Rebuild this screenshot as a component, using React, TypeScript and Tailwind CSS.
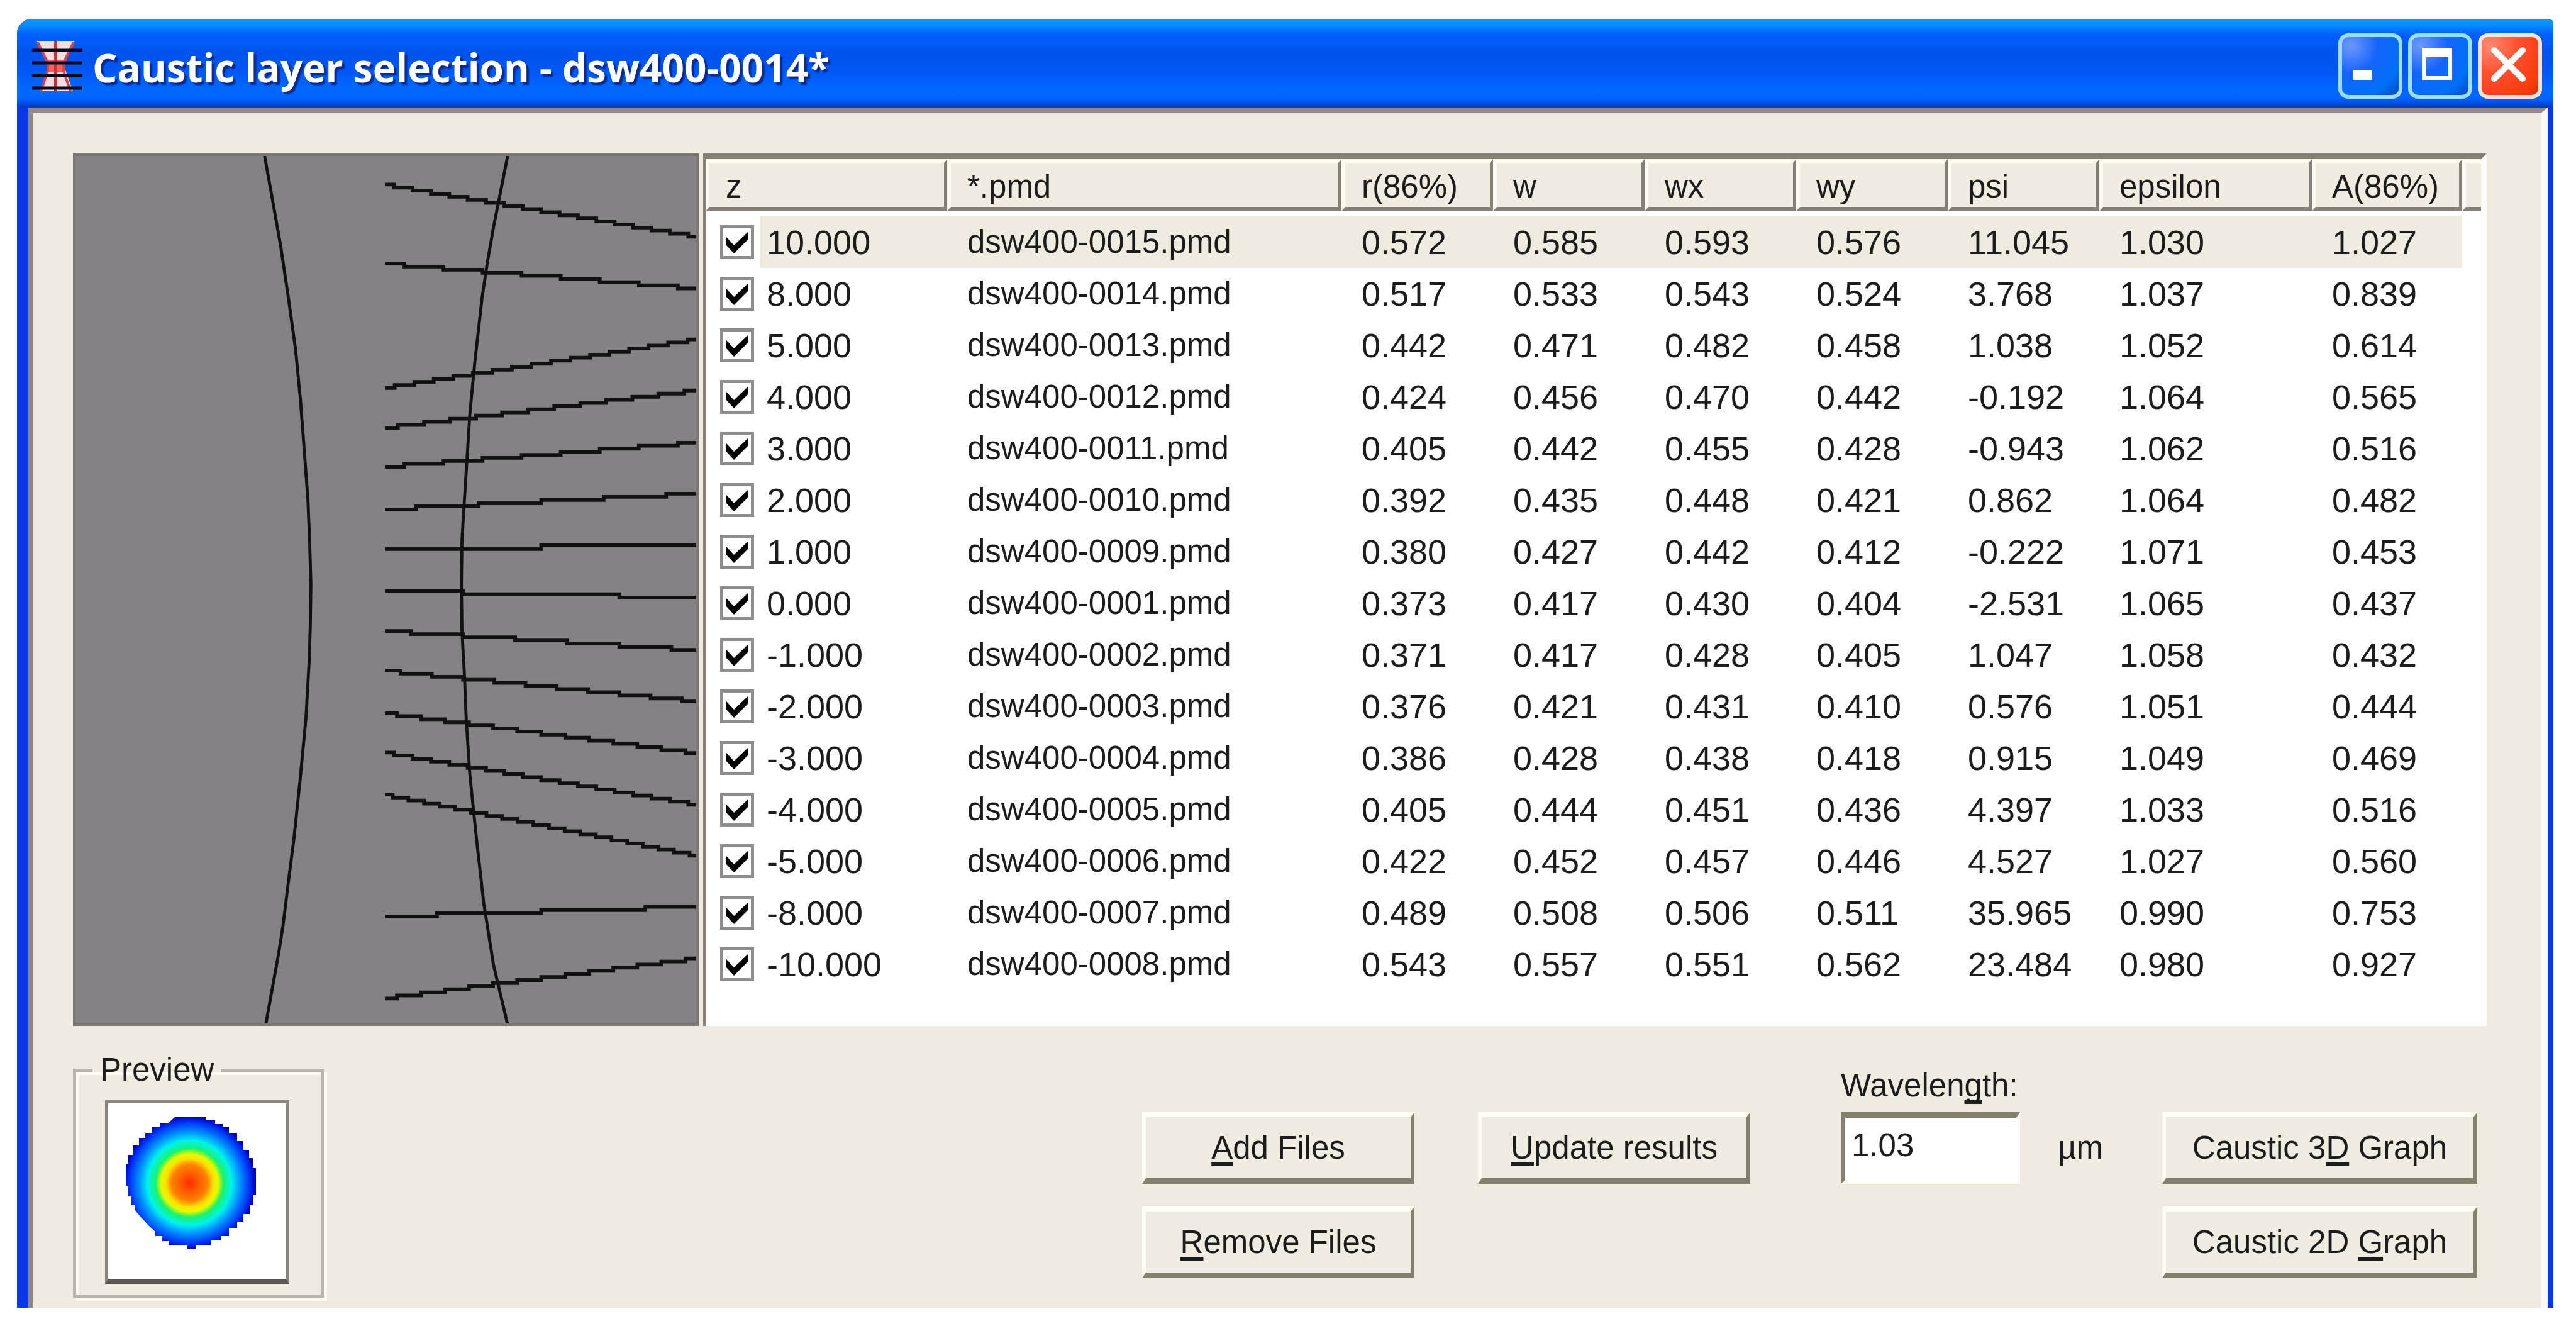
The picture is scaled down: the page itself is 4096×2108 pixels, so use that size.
import { useState } from "react";
import type { ReactNode } from "react";

interface Layer {
  z: string;
  file: string;
  values: string[];
}

const columns = ["z", "*.pmd", "r(86%)", "w", "wx", "wy", "psi", "epsilon", "A(86%)"];

const layers: Layer[] = [
  { z: "10.000", file: "dsw400-0015.pmd", values: ["0.572", "0.585", "0.593", "0.576", "11.045", "1.030", "1.027"] },
  { z: "8.000", file: "dsw400-0014.pmd", values: ["0.517", "0.533", "0.543", "0.524", "3.768", "1.037", "0.839"] },
  { z: "5.000", file: "dsw400-0013.pmd", values: ["0.442", "0.471", "0.482", "0.458", "1.038", "1.052", "0.614"] },
  { z: "4.000", file: "dsw400-0012.pmd", values: ["0.424", "0.456", "0.470", "0.442", "-0.192", "1.064", "0.565"] },
  { z: "3.000", file: "dsw400-0011.pmd", values: ["0.405", "0.442", "0.455", "0.428", "-0.943", "1.062", "0.516"] },
  { z: "2.000", file: "dsw400-0010.pmd", values: ["0.392", "0.435", "0.448", "0.421", "0.862", "1.064", "0.482"] },
  { z: "1.000", file: "dsw400-0009.pmd", values: ["0.380", "0.427", "0.442", "0.412", "-0.222", "1.071", "0.453"] },
  { z: "0.000", file: "dsw400-0001.pmd", values: ["0.373", "0.417", "0.430", "0.404", "-2.531", "1.065", "0.437"] },
  { z: "-1.000", file: "dsw400-0002.pmd", values: ["0.371", "0.417", "0.428", "0.405", "1.047", "1.058", "0.432"] },
  { z: "-2.000", file: "dsw400-0003.pmd", values: ["0.376", "0.421", "0.431", "0.410", "0.576", "1.051", "0.444"] },
  { z: "-3.000", file: "dsw400-0004.pmd", values: ["0.386", "0.428", "0.438", "0.418", "0.915", "1.049", "0.469"] },
  { z: "-4.000", file: "dsw400-0005.pmd", values: ["0.405", "0.444", "0.451", "0.436", "4.397", "1.033", "0.516"] },
  { z: "-5.000", file: "dsw400-0006.pmd", values: ["0.422", "0.452", "0.457", "0.446", "4.527", "1.027", "0.560"] },
  { z: "-8.000", file: "dsw400-0007.pmd", values: ["0.489", "0.508", "0.506", "0.511", "35.965", "0.990", "0.753"] },
  { z: "-10.000", file: "dsw400-0008.pmd", values: ["0.543", "0.557", "0.551", "0.562", "23.484", "0.980", "0.927"] },
];

// Start and end height of the line that leads from the beam to each row
const rays = [
  [303, 389],
  [433, 474],
  [638, 558],
  [704, 642],
  [768, 728],
  [838, 812],
  [903, 897],
  [972, 983],
  [1038, 1069],
  [1103, 1154],
  [1173, 1239],
  [1238, 1324],
  [1307, 1408],
  [1508, 1492],
  [1643, 1577],
];

// Aliased line: flat runs joined by 5 unit steps
function steppedPath(y1: number, y2: number) {
  const x1 = 634;
  const x2 = 1149;
  const steps = Math.max(1, Math.round(Math.abs(y2 - y1) / 5));
  const rise = (y2 - y1) / steps;
  const run = (x2 - x1) / steps;
  let d = `M${x1} ${y1}`;
  for (let i = 0; i < steps; i++) {
    d += `H${x1 + run * (i + 0.5)}V${y1 + rise * (i + 1)}`;
  }
  return d + `H${x2}`;
}

function CausticView() {
  return (
    <svg
      viewBox="124 256 1023 1428"
      preserveAspectRatio="none"
      className="w-[995px] shrink-0 self-stretch bg-[#848284] border-4 border-[#7d776d]"
      fill="none"
      stroke="#111"
      strokeWidth="6"
    >
      <polyline
        strokeWidth="5"
        points="435,252 449,330 462,403 475,490 487,577 495,660 501,740 507,820 510,893 512,960 511,1030 509,1090 504,1179 494,1285 484,1380 475,1450 466,1523 459,1568 451,1612 437,1689"
      />
      <polyline
        strokeWidth="5"
        points="837,252 825,313 813,373 803,430 794,490 782,597 774,680 766,806 761,888 760,960 761,1040 765,1110 768,1184 774,1275 785,1381 797,1487 813,1588 837,1689"
      />
      {rays.map(([y1, y2]) => (
        <path key={y1} d={steppedPath(y1, y2)} />
      ))}
    </svg>
  );
}

function AppIcon() {
  return (
    <svg viewBox="0 0 16 16" className="size-20 shrink-0">
      <path d="M1.5 0H13.5L10.5 7V9L13 16H2.5L5 9V7Z" fill="#f3dde0" />
      <path d="M5 6H10V10H5Z" fill="#f4605c" />
      <path d="M1.8 0.5L5 7V9.5L2.8 16M13.2 0.5L10 7V9.5L12.2 16" fill="none" stroke="#d8404a" strokeWidth="0.8" />
      <path d="M7.5 0V16" stroke="#c8303a" strokeWidth="1" />
      <path d="M0 3H16M0 7H16M0 11H16M0 15H16" stroke="#0a0a1c" strokeWidth="1" />
    </svg>
  );
}

function TitleButton({ label, close, children }: { label: string; close?: boolean; children: ReactNode }) {
  return (
    <button
      type="button"
      aria-label={label}
      className={
        close
          ? "w-[102px] h-[104px] rounded-2xl border-6 border-[#fbe0dc] bg-[radial-gradient(circle_at_15%_15%,#ff8a70,#ff5030_40%,#f53a08_85%,#c83010)]"
          : "w-[102px] h-[104px] rounded-2xl border-6 border-[#9edcfb] bg-[radial-gradient(circle_at_15%_15%,#6e98ff,#1464fa_40%,#0070f8_75%,#0048c0)]"
      }
    >
      <svg viewBox="0 0 90 92" className="size-full">
        {children}
      </svg>
    </button>
  );
}

function PushButton({ className, children }: { className: string; children: ReactNode }) {
  return (
    <button
      type="button"
      className={`h-[114px] bg-[#f1ece0] border-t-8 border-l-6 border-r-6 border-b-9 border-t-[#fffdf0] border-l-[#fffdf0] border-r-[#857f70] border-b-[#857f70] whitespace-nowrap ${className}`}
    >
      {children}
    </button>
  );
}

function Key({ children }: { children: ReactNode }) {
  return <span className="underline decoration-6 underline-offset-6 [text-decoration-skip-ink:none]">{children}</span>;
}

function LayerRow({ layer, selected }: { layer: Layer; selected: boolean }) {
  const [checked, setChecked] = useState(true);
  const cell = selected ? "p-0 pl-8 bg-[#f0ebdf]" : "p-0 pl-8";

  return (
    <tr className="h-[82px] text-[54px]">
      <td className="p-0">
        <div className="flex items-center pl-[23px]">
          <span className="relative size-[54px] shrink-0">
            <input
              id={`layer${layer.z}`}
              type="checkbox"
              checked={checked}
              onChange={(e) => setChecked(e.target.checked)}
              className="block size-full appearance-none border-5 border-[#8d8d8d] bg-white"
            />
            {checked && (
              <svg viewBox="0 0 54 54" className="absolute inset-0 pointer-events-none">
                <path d="M10 19L22 32L44 11V23L22 45L10 32Z" fill="#000" />
              </svg>
            )}
          </span>
          <label
            htmlFor={`layer${layer.z}`}
            className={selected ? "ml-2.5 pl-2.5 flex-1 h-[82px] leading-[82px] bg-[#f0ebdf]" : "ml-2.5 pl-2.5 flex-1 h-[82px] leading-[82px]"}
          >
            {layer.z}
          </label>
        </div>
      </td>
      <td className={`${cell} text-[51px]`}>{layer.file}</td>
      {layer.values.map((value, i) => (
        <td key={i} className={cell}>
          {value}
        </td>
      ))}
      <td />
    </tr>
  );
}

function LayerTable() {
  return (
    <div className="flex-1 min-w-0 bg-white border-t-9 border-l-4 border-r-9 border-t-[#857f74] border-l-[#857f74] border-r-[#fffefa]">
      <table className="w-full table-fixed border-separate border-spacing-0 text-left whitespace-nowrap">
        <colgroup>
          <col className="w-[384px]" />
          <col className="w-[627px]" />
          <col className="w-[241px]" />
          <col className="w-[241px]" />
          <col className="w-[241px]" />
          <col className="w-[241px]" />
          <col className="w-[241px]" />
          <col className="w-[338px]" />
          <col className="w-[239px]" />
          <col />
        </colgroup>
        <thead>
          <tr className="h-[83px] bg-[#f1ecdf]">
            {columns.map((name) => (
              <th
                key={name}
                className="p-0 pt-1.5 pl-[26px] font-normal border-t-6 border-l-6 border-r-5 border-b-7 border-t-[#fdfbf3] border-l-[#fdfbf3] border-r-[#857f74] border-b-[#857f74] leading-[64px]"
              >
                {name}
              </th>
            ))}
            <th className="p-0 border-t-6 border-l-6 border-b-7 border-t-[#fdfbf3] border-l-[#fdfbf3] border-b-[#857f74]" />
          </tr>
        </thead>
        <tbody className="before:block before:h-2">
          {layers.map((layer, i) => (
            <LayerRow key={layer.z} layer={layer} selected={i === 0} />
          ))}
        </tbody>
      </table>
    </div>
  );
}

function BeamPreview() {
  return (
    <fieldset className="mt-[38px] border-5 border-[#bab5a8] pl-[46px] pr-[50px] pb-4 shadow-[5px_5px_0_#fdfaf0,inset_5px_5px_0_#fdfaf0]">
      <legend className="-ml-5 px-3 leading-[64px]">Preview</legend>
      <div className="mt-4 size-[293px] bg-white border-5 border-b-9 border-[#8b867c] border-b-[#5d5851]">
        <svg viewBox="0 0 283 279" className="size-full">
          <defs>
            <radialGradient id="beam" cx="0.49" cy="0.5" r="0.51">
              <stop offset="0" stopColor="#ff2a00" />
              <stop offset="0.12" stopColor="#ff5400" />
              <stop offset="0.27" stopColor="#ff8400" />
              <stop offset="0.36" stopColor="#ffe000" />
              <stop offset="0.43" stopColor="#e4fa00" />
              <stop offset="0.51" stopColor="#1cf26c" />
              <stop offset="0.63" stopColor="#00f4ea" />
              <stop offset="0.74" stopColor="#00a0ff" />
              <stop offset="0.86" stopColor="#0050ff" />
              <stop offset="0.95" stopColor="#0018e0" />
              <stop offset="1" stopColor="#0000a0" />
            </radialGradient>
          </defs>
          <path
            d="M106 22H155V27H170V33H182V38H192V47H205V60H215V74H224V87H230V103H235V146H231V162H225V176H215V188H205V198H192V211H179V218H164V226H139V231H126V226H97V219H86V211H75V204L64 194L53 182L43 170V162H37V148H32V132H28V96H32V82H39V67H49V55H59V47H70V38H82V31H96Z"
            fill="url(#beam)"
          />
        </svg>
      </div>
    </fieldset>
  );
}

export default function App() {
  const [wavelength, setWavelength] = useState("1.03");

  return (
    <div className="min-h-screen flex flex-col bg-white pt-[30px] pb-[29px] pl-[27px] pr-9 text-[51px] leading-[64px] text-[#1c1c1c] font-['Liberation_Sans',sans-serif]">
      <div className="flex-1 flex flex-col rounded-tl-3xl rounded-tr-lg overflow-hidden bg-[#0838e8]">
        {/* Title bar */}
        <header className="h-[141px] shrink-0 flex items-center pt-2 pl-6 pr-[18px] bg-[linear-gradient(#0a9aff,#0a90ff_6%,#0060fa_18%,#0052ea_40%,#0058f4_60%,#0068ff_78%,#0064ff_90%,#0038c4)]">
          <AppIcon />
          <h1 className="ml-4 pt-1 flex-1 text-[62px] font-bold text-white whitespace-nowrap font-['Open_Sans',sans-serif] [text-shadow:4px_4px_2px_#0a2a90]">
            Caustic layer selection - dsw400-0014*
          </h1>
          <div className="flex gap-[9px]">
            <TitleButton label="Minimize">
              <path d="M17 53H48V68H17Z" fill="#fff" />
            </TitleButton>
            <TitleButton label="Maximize">
              <path d="M16 17H64V68H16ZM23 32V62H58V32Z" fill="#fff" fillRule="evenodd" />
            </TitleButton>
            <TitleButton label="Close" close>
              <path d="M20 21L65 66M65 21L20 66" stroke="#fff" strokeWidth="10" strokeLinecap="round" />
            </TitleButton>
          </div>
        </header>

        <main className="flex-1 ml-[18px] mr-[9px] bg-[#f1ebdf] border-t-9 border-l-7 border-r-11 border-t-[#8d8a90] border-l-[#8d8784] border-r-[#fdfcf4] pt-16 pl-16 pr-[86px]">
          {/* Layers */}
          <div className="flex gap-[7px] h-[1387px]">
            <CausticView />
            <LayerTable />
          </div>

          {/* Actions */}
          <div className="flex items-start">
            <BeamPreview />
            <div className="ml-auto mt-[137px] flex flex-col gap-9">
              <PushButton className="w-[433px]">
                <Key>A</Key>dd Files
              </PushButton>
              <PushButton className="w-[433px]">
                <Key>R</Key>emove Files
              </PushButton>
            </div>
            <PushButton className="ml-[101px] mt-[137px] w-[433px]">
              <Key>U</Key>pdate results
            </PushButton>
            <div className="ml-36 mt-[63px] flex w-[412px] flex-col gap-2.5">
              <label htmlFor="wavelength" className="whitespace-nowrap">
                Wavelen<Key>g</Key>th:
              </label>
              <div className="flex items-center">
                <input
                  id="wavelength"
                  value={wavelength}
                  onChange={(e) => setWavelength(e.target.value)}
                  className="w-[285px] h-[114px] pl-2.5 pb-3 bg-white border-t-9 border-l-7 border-r-6 border-b-6 border-t-[#857f70] border-l-[#857f70] border-r-[#fffefa] border-b-[#fffefa] outline-none"
                />
                <span className="ml-[60px]">µm</span>
              </div>
            </div>
            <div className="ml-[99px] mr-[15px] mt-[137px] flex flex-col gap-9">
              <PushButton className="w-[501px]">
                Caustic 3<Key>D</Key> Graph
              </PushButton>
              <PushButton className="w-[501px]">
                Caustic 2D <Key>G</Key>raph
              </PushButton>
            </div>
          </div>
        </main>
      </div>
    </div>
  );
}
